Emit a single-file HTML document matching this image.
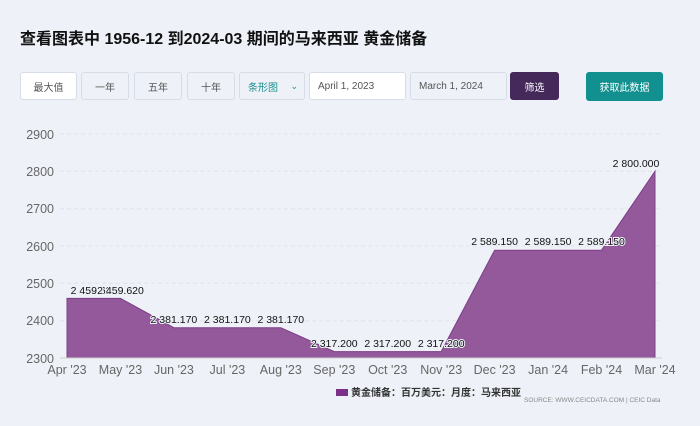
<!DOCTYPE html>
<html><head><meta charset="utf-8"><style>
*{margin:0;padding:0;box-sizing:border-box}
body{width:700px;height:426px;background:#eef2f8;font-family:"Liberation Sans","Noto Sans CJK SC",sans-serif;position:relative;overflow:hidden}
h1{position:absolute;left:20px;top:25px;font-size:16px;font-weight:bold;color:#111}
.b{position:absolute;top:72px;height:28px;border:1px solid #d6dde6;border-radius:3px;background:#eef2f8;font-size:10px;color:#555;display:flex;align-items:center;justify-content:center}
</style></head><body>
<h1>查看图表中 1956-12 到2024-03 期间的马来西亚 黄金储备</h1>
<div class="b" style="left:20px;width:57px;background:#fff">最大值</div>
<div class="b" style="left:81px;width:48px">一年</div>
<div class="b" style="left:134px;width:48px">五年</div>
<div class="b" style="left:187px;width:48px">十年</div>
<div class="b" style="left:239px;width:66px;color:#1a8f8f;justify-content:space-between;padding:0 6px 0 8px">条形图<span style="font-size:9px">&#8964;</span></div>
<div class="b" style="left:309px;width:97px;background:#fff;justify-content:flex-start;padding-left:8px">April 1, 2023</div>
<div class="b" style="left:410px;width:97px;justify-content:flex-start;padding-left:8px">March 1, 2024</div>
<div class="b" style="left:510px;width:49px;background:#45295a;color:#fff;border-color:#45295a">筛选</div>
<div class="b" style="left:586px;width:77px;background:#11908f;color:#fff;border-color:#11908f;height:29px">获取此数据</div>
<svg width="700" height="426" style="position:absolute;left:0;top:0" font-family="Liberation Sans, sans-serif">
<g stroke="#dde2ea" stroke-dasharray="4,3">
<line x1="60" x2="662" y1="134" y2="134"/><line x1="60" x2="662" y1="171.3" y2="171.3"/><line x1="60" x2="662" y1="208.7" y2="208.7"/><line x1="60" x2="662" y1="246" y2="246"/><line x1="60" x2="662" y1="283.3" y2="283.3"/><line x1="60" x2="662" y1="320.7" y2="320.7"/>
</g>
<g fill="#666" font-size="12.5" text-anchor="end">
<text x="54" y="139">2900</text><text x="54" y="176">2800</text><text x="54" y="213">2700</text><text x="54" y="251">2600</text><text x="54" y="288">2500</text><text x="54" y="325">2400</text><text x="54" y="363">2300</text>
</g>
<path d="M67,358 L67,298.4 L120.5,298.4 L173.9,327.7 L227.4,327.7 L280.8,327.7 L334.3,351.6 L387.7,351.6 L441.2,351.6 L494.6,250.2 L548.1,250.2 L601.5,250.2 L655,171.3 L655,358 Z" fill="#93599b" stroke="#7d3e87" stroke-width="1"/>
<line x1="60" x2="662" y1="358" y2="358" stroke="#ccc"/>
<g fill="#666" font-size="12.5" text-anchor="middle">
<text x="67" y="374">Apr '23</text><text x="120.5" y="374">May '23</text><text x="173.9" y="374">Jun '23</text><text x="227.4" y="374">Jul '23</text><text x="280.8" y="374">Aug '23</text><text x="334.3" y="374">Sep '23</text><text x="387.7" y="374">Oct '23</text><text x="441.2" y="374">Nov '23</text><text x="494.6" y="374">Dec '23</text><text x="548.1" y="374">Jan '24</text><text x="601.5" y="374">Feb '24</text><text x="655" y="374">Mar '24</text>
</g>
<g fill="#111" font-size="10.5" text-anchor="middle" stroke="#eef2f8" stroke-width="2" paint-order="stroke">
<text x="94" y="294">2 459.620</text><text x="120.5" y="294" fill="#111">2 459.620</text>
<text x="173.9" y="323">2 381.170</text><text x="227.4" y="323">2 381.170</text><text x="280.8" y="323">2 381.170</text>
<text x="334.3" y="347">2 317.200</text><text x="387.7" y="347">2 317.200</text><text x="441.2" y="347">2 317.200</text>
<text x="494.6" y="245">2 589.150</text><text x="548.1" y="245">2 589.150</text><text x="601.5" y="245">2 589.150</text>
<text x="636" y="167">2 800.000</text>
</g>
<rect x="336" y="389" width="12" height="7" fill="#7b2f86"/>
<text x="351" y="396" font-size="10" fill="#333" font-weight="bold" font-family="Liberation Sans, Noto Sans CJK SC, sans-serif">黄金储备：百万美元：月度：马来西亚</text>
<text x="524" y="402" font-size="6.5" fill="#888">SOURCE: WWW.CEICDATA.COM | CEIC Data</text>
</svg>
</body></html>
